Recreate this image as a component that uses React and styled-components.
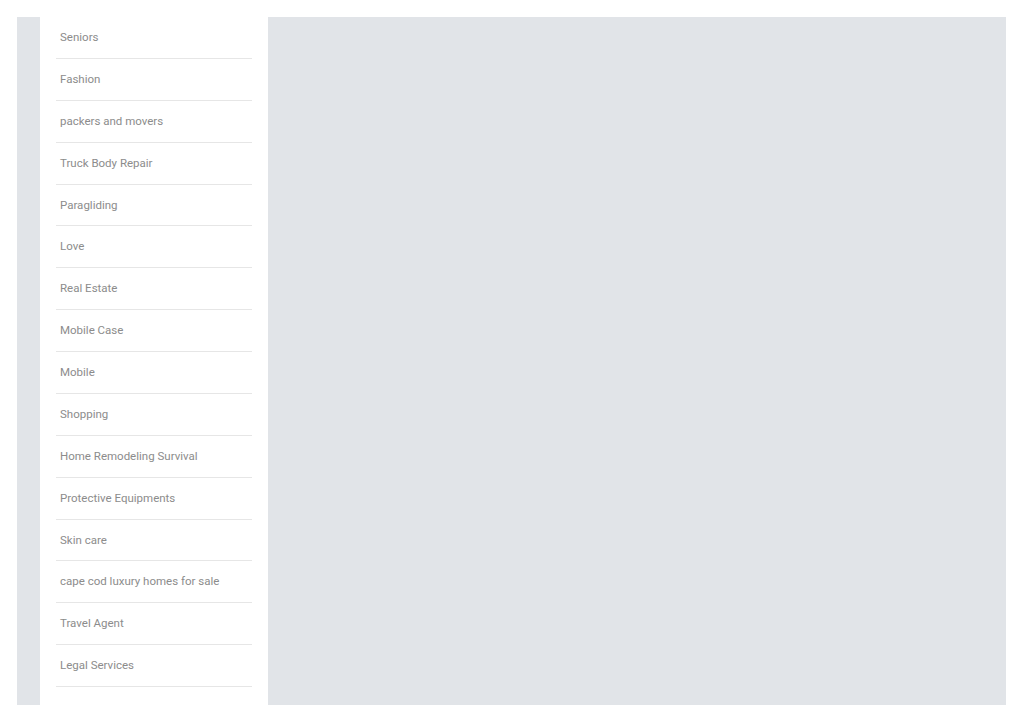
import styled, { createGlobalStyle } from "styled-components";

const GlobalStyle = createGlobalStyle`
  html, body {
    margin: 0;
    padding: 0;
    background: #fff;
  }
  body {
    font-family: Roboto, "Liberation Sans", sans-serif;
  }
`;

const Page = styled.div`
  padding: 17px 18px 17px 17px;
`;

const Frame = styled.div`
  display: flex;
  height: 688px;
  background: #e1e4e8;
  padding-left: 23px;
  overflow: hidden;
`;

const Sidebar = styled.aside`
  width: 228px;
  flex: none;
  background: #fff;
  padding: 0 16px;
  box-sizing: border-box;
`;

const List = styled.ul`
  list-style: none;
  margin: 0;
  padding: 0;
`;

const Item = styled.li`
  padding: 10px 4px;
  line-height: 20.875px;
  font-size: 11.5px;
  font-weight: 400;
  color: #8c8c8c;
  border-bottom: 1px solid #e6e6e6;
`;

const Content = styled.main`
  flex: 1;
`;

const categories = [
  "Seniors",
  "Fashion",
  "packers and movers",
  "Truck Body Repair",
  "Paragliding",
  "Love",
  "Real Estate",
  "Mobile Case",
  "Mobile",
  "Shopping",
  "Home Remodeling Survival",
  "Protective Equipments",
  "Skin care",
  "cape cod luxury homes for sale",
  "Travel Agent",
  "Legal Services",
];

const App = () => {
  return (
    <>
      <GlobalStyle />
      <Page>
        <Frame>
          <Sidebar>
            <List>
              {categories.map((name) => (
                <Item key={name}>{name}</Item>
              ))}
            </List>
          </Sidebar>
          <Content />
        </Frame>
      </Page>
    </>
  );
};

export default App;
